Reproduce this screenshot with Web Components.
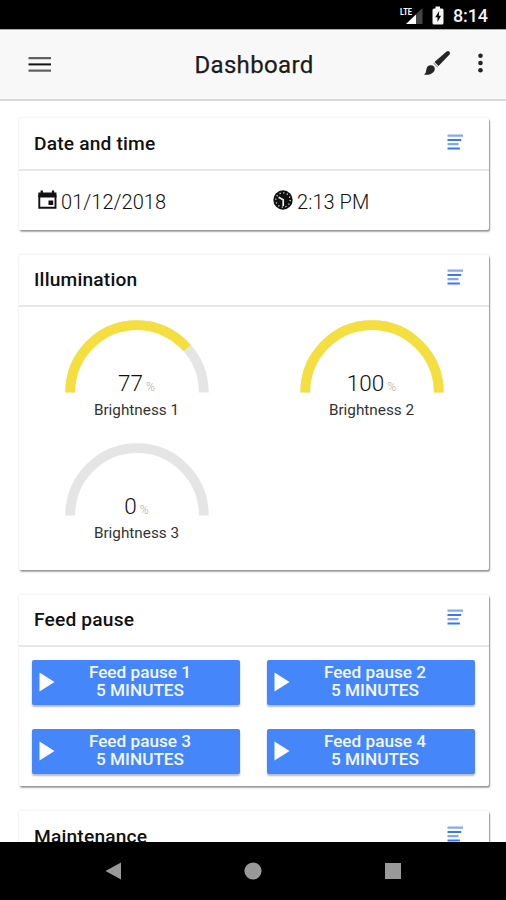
<!DOCTYPE html>
<html lang="en">
<head>
<meta charset="utf-8">
<title>Dashboard</title>
<style>
html,body{margin:0;height:900px;overflow:hidden;background:#fff}
body{font-family:Roboto,"Liberation Sans",sans-serif;color:#111}
</style>
</head>
<body>
<app-screen></app-screen>
<script>
const define = (name, html, fill) => customElements.define(name, class extends HTMLElement {
  constructor() {
    super();
    const t = document.createElement('template');
    t.innerHTML = html;
    this.attachShadow({mode: 'open'}).append(t.content.cloneNode(true));
  }
  connectedCallback() { if (fill) fill(this, this.shadowRoot); }
});

define('status-bar', `<style>
:host{display:flex;height:29px;background:#000;justify-content:flex-end;align-items:center;padding-right:18px;color:#f4f4f4;border-bottom:1px solid #aaa;box-sizing:content-box}
.sig{width:23px;height:19px;margin-right:9px}.bat{width:12px;height:19px;margin-right:9px}
span{font-size:18px;font-weight:500;line-height:29px;padding-top:2px;letter-spacing:-.1px}
svg{display:block;margin-top:1px}
</style>
<svg class="sig" viewBox="0 0 23 19"><path d="M22.500 2v16H6z" fill="#444"/><path d="M16 8.500v9.500H6z" fill="#fff"/><text x="0" y="8.500" font-size="9.500" font-weight="700" textLength="12" lengthAdjust="spacingAndGlyphs" fill="#fff" stroke="#000" stroke-width="1" paint-order="stroke">LTE</text></svg>
<svg class="bat" viewBox="0 0 12 19"><path d="M3.500 0.500h4.500v2h2q1.500 0 1.500 1.500v13q0 1.500-1.500 1.500H2q-1.500 0-1.500-1.500V4q0-1.500 1.500-1.500h1.500z" fill="#f4f4f4"/><path d="M7.200 5L3.200 11.200h2.300V16l3.600-6.300H6.800z" fill="#000"/></svg>
<span>8:14</span>`);

define('tool-bar', `<style>
:host{display:grid;grid-template-columns:130px 1fr 130px;align-items:center;height:71px;background:#f8f8f8;border-bottom:2px solid #d8d8d8;box-sizing:border-box}
h1{margin:0;font-size:24px;font-weight:400;letter-spacing:.35px;-webkit-text-stroke:.25px #1c1c1c;text-align:center;color:#1c1c1c;line-height:30px;padding:1px 0 1px 2px;white-space:nowrap}
.m{width:24px;height:18px;margin-left:28px}
.r{display:flex;align-items:center;justify-content:flex-end;gap:26px;padding-right:22px;margin-top:-3px}
svg{display:block;flex:none}
.b{width:28px;height:27px}.d{width:7px;height:22px}
</style>
<svg class="m" viewBox="0 0 24 18"><path d="M.5 2.200h22.500M.5 14.600h22.500" stroke="#626262" stroke-width="2.300"/><path d="M.5 8.400h22.500" stroke="#111" stroke-width="2"/></svg>
<h1><slot></slot></h1>
<div class="r">
<svg class="b" viewBox="0 0 28 27"><path d="M23.600 1.600q1.600-1.100 2.800.1t.2 2.800L15.500 15.900l-4-3.900z" fill="#252525"/><path d="M11 12.800l3.900 3.900-.7.700-3.900-3.900z" fill="#999"/><path d="M6 15.500q3.300-.9 5 1.100 1.800 2.500-.2 5.100Q7.600 25.600 1 24.600q2-1 2.200-4 .3-4.200 2.800-5.100z" fill="#252525"/></svg>
<svg class="d" viewBox="0 0 7 22"><g fill="#252525"><circle cx="3.500" cy="3.700" r="2.300"/><circle cx="3.500" cy="11" r="2.300"/><circle cx="3.500" cy="18.300" r="2.300"/></g></svg>
</div>`);

define('dash-card', `<style>
:host{display:flex;flex-direction:column;box-sizing:border-box;background:#fff;border-radius:2px;box-shadow:1px 2px 1.500px rgba(0,0,0,.3),1px 1px 1px rgba(0,0,0,.13),0 0 2px 1px rgba(0,0,0,.05);flex:none}
header{display:flex;justify-content:space-between;align-items:center;height:var(--head,50.500px);border-bottom:2px solid #e6e6e6;padding:0 25px 0 15px;flex:none}
h2{margin:0;font-size:19.200px;letter-spacing:.17px;font-weight:500;line-height:24px;white-space:nowrap;color:#111;padding-top:1px}
svg{width:17px;height:18px;display:block;margin-top:var(--icon-lift,-5px)}
.body{display:grid;grid-template-columns:1fr 1fr}
</style>
<header><h2></h2><svg viewBox="0 0 17 18"><path d="M.5 2.600H16M.5 11.200h11" stroke="#82a9f6" stroke-width="2.200"/><path d="M.5 7H14.200M.5 15.600h12.400" stroke="#3b79f0" stroke-width="2"/></svg></header>
<div class="body"><slot></slot></div>`, (el, r) => { r.querySelector('h2').textContent = el.getAttribute('heading'); });

define('info-item', `<style>
:host{display:flex;align-items:center;height:59px;padding-left:18px;gap:3px;font-size:20px;font-weight:300;color:#111;white-space:nowrap}
::slotted(svg){display:block;flex:none;margin-top:-1px}
span{padding-top:3px;letter-spacing:.05px}
</style><slot name="icon"></slot><span><slot></slot></span>`);

define('arc-gauge', `<style>
:host{display:flex;flex-direction:column;align-items:center;height:123px}
svg{display:block;width:146px;height:74px}
.v{display:flex;align-items:baseline;justify-content:center;gap:3px;margin-top:-22px;height:24px;font-size:22.500px;line-height:24px;color:#111;font-weight:350}
.v small{font-size:12px;color:#aaa;font-weight:300}
.l{font-size:15.300px;line-height:20px;margin-top:5px;color:#333;font-weight:400;white-space:nowrap}
</style>
<svg viewBox="0 0 146 74"><path d="M6.200 73.500a66.800 67.300 0 0 1 133.600 0" fill="none" stroke="#e5e5e5" stroke-width="9.800"/><path class="f" pathLength="100" d="M6.200 73.500a66.800 67.300 0 0 1 133.600 0" fill="none" stroke="#f4df3e" stroke-width="9.800"/></svg>
<div class="v"><span></span><small>%</small></div><div class="l"><slot></slot></div>`, (el, r) => {
  const v = +el.getAttribute('value');
  r.querySelector('span').textContent = v;
  const f = r.querySelector('.f');
  if (v) f.setAttribute('stroke-dasharray', v + ' 200'); else f.remove();
});

define('feed-button', `<style>
:host{display:grid;grid-template-columns:32px 1fr 24px;align-items:center;height:44.500px;margin:0 14px 0 13px;background:#4587fb;color:#f3f7ff;border-radius:2px;box-shadow:0 2px 2px rgba(0,0,0,.28);text-align:center;font-size:17.200px;line-height:17.300px;font-weight:500;white-space:nowrap}
svg{display:block;width:16px;height:20px;margin-left:7px}
div{padding-bottom:1.500px}
</style><svg viewBox="0 0 16 20"><path d="M.5.500L15.500 10 .5 19.500z" fill="#fff"/></svg><div><slot></slot><br>5 MINUTES</div>`);

define('nav-bar', `<style>
:host{display:flex;height:58px;background:#000;align-items:center;justify-content:center;gap:122px;flex:none}
svg{display:block;width:18px;height:18px}
</style>
<svg viewBox="0 0 18 18"><path d="M17 .5v17L1.500 9z" fill="#999"/></svg>
<svg viewBox="0 0 18 18"><circle cx="9" cy="9" r="8.600" fill="#999"/></svg>
<svg viewBox="0 0 18 18"><path d="M1 1h16v16H1z" fill="#999"/></svg>`);

define('app-screen', `<style>
:host{display:flex;flex-direction:column;width:506px;height:900px;overflow:hidden}
status-bar,tool-bar{flex:none}
main{flex:1;min-height:0;overflow:hidden;display:flex;flex-direction:column;gap:25px;padding:16.500px 17px 0 19px;background:#fff}
.date{height:112px;--icon-lift:-3px;--head:51.500px}.light{height:315px}.feed{height:191.500px}.maint{height:80px}
.g{padding-top:12px}
.b{margin-top:13px}.b2{margin-top:24.500px}
</style>
<status-bar></status-bar>
<tool-bar>Dashboard</tool-bar>
<main>
<dash-card class="date" heading="Date and time">
<info-item><svg slot="icon" width="21" height="20" viewBox="0 0 21 20"><path d="M2.300 4.500v13.300h16.200V4.500" fill="none" stroke="#111" stroke-width="1.900"/><path d="M1.400 2.500h2.200V.5h2.300v2h9V.5h2.300v2h2.200v5H1.400zM11.500 10.500h4.700v4.500h-4.700z" fill="#111"/></svg>01/12/2018</info-item>
<info-item><svg slot="icon" width="22" height="20" viewBox="0 0 22 20"><circle cx="11" cy="10" r="9.700" fill="#111"/><circle cx="11" cy="10" r="7.200" fill="none" stroke="#ddd" stroke-width="1.300" stroke-dasharray="1.200 2.570"/><path d="M6.600 7.200l4.600 2.600v6.400" fill="none" stroke="#eee" stroke-width="1.700"/></svg>2:13 PM</info-item>
</dash-card>
<dash-card class="light" heading="Illumination">
<arc-gauge class="g" value="77">Brightness 1</arc-gauge><arc-gauge class="g" value="100">Brightness 2</arc-gauge><arc-gauge value="0">Brightness 3</arc-gauge>
</dash-card>
<dash-card class="feed" heading="Feed pause">
<feed-button class="b">Feed pause 1</feed-button><feed-button class="b">Feed pause 2</feed-button><feed-button class="b2">Feed pause 3</feed-button><feed-button class="b2">Feed pause 4</feed-button>
</dash-card>
<dash-card class="maint" heading="Maintenance"></dash-card>
</main>
<nav-bar></nav-bar>`);
</script>
</body>
</html>
